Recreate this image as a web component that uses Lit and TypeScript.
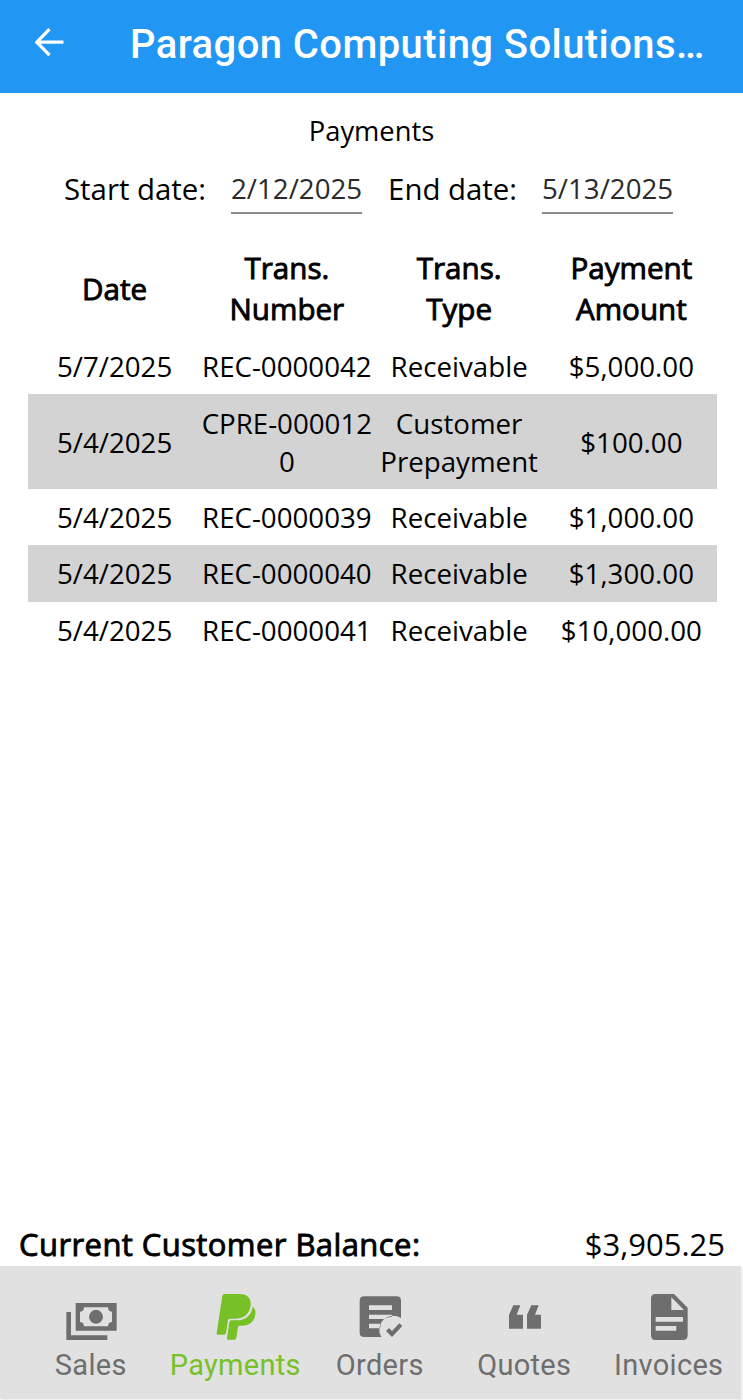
import { LitElement, html, css, svg } from "lit";
import { customElement, property } from "lit/decorators.js";
import { classMap } from "lit/directives/class-map.js";

interface Payment {
  date: string;
  num: string;
  type: string;
  amount: string;
}

const PAYMENTS: Payment[] = [
  { date: "5/7/2025", num: "REC-0000042", type: "Receivable", amount: "$5,000.00" },
  { date: "5/4/2025", num: "CPRE-0000120", type: "Customer Prepayment", amount: "$100.00" },
  { date: "5/4/2025", num: "REC-0000039", type: "Receivable", amount: "$1,000.00" },
  { date: "5/4/2025", num: "REC-0000040", type: "Receivable", amount: "$1,300.00" },
  { date: "5/4/2025", num: "REC-0000041", type: "Receivable", amount: "$10,000.00" },
];

const TABS = [
  {
    label: "Sales",
    box: "57 39 192 144",
    icon: svg`<path fill-rule="evenodd" d="M107 69H230V152H107ZM132 82A12 12 0 0 1 120 95V126A12 12 0 0 1 132 139H204A12 12 0 0 1 216 126V95A12 12 0 0 1 204 82Z"/><circle cx="168" cy="110.500" r="21"/><path d="M79 96H93V166H202V180H79Z"/>`,
  },
  {
    label: "Payments",
    box: "99 39 192 144",
    icon: svg`<path d="M163 42H209C232 42 245 56 242 76C239 102 222 116 197 116H180Q175 116 174 121L168 160Q167 164 163 164H144Q139 164 140 159L157 47Q158 42 163 42Z"/><path d="M248 80C254 84 258 93 256 103C253 126 238 137 216 137H209Q205 137 204 141L199 174Q198 179 194 179H174Q170 179 171 175L178 126Q179 121 184 121H198C226 121 244 107 248 80Z"/>`,
  },
  {
    label: "Orders",
    box: "84 39 192 144",
    icon: svg`<path fill-rule="evenodd" d="M133 49H230Q243 49 243 62V114A42 42 0 0 0 184 171H133Q119 171 119 158V62Q119 49 133 49ZM147 76V90H216V76ZM147 104V117H193Q202 111 216 110V104ZM147 131V145H180Q181 138 184 131Z"/><path d="M207 144L216 153L238 130L247 138L216 171L198 153Z"/>`,
  },
  {
    label: "Quotes",
    box: "96 39 192 144",
    icon: svg`<path d="M160 76H181L170 104H189V146H147V104ZM214 76H236L225 104H243V146H201V104Z"/>`,
  },
  {
    label: "Invoices",
    box: "111 39 192 144",
    icon: svg`<path fill-rule="evenodd" d="M166 42H222L263 83V166Q263 180 249 180H166Q153 180 153 166V56Q153 42 166 42ZM214 52V90H252ZM167 111V125H249V111ZM167 138V152H229V138Z"/>`,
  },
];

@customElement("date-field")
class DateField extends LitElement {
  @property() label = "";
  @property() value = "";
  static styles = css`
    :host { display: flex; align-items: flex-start; }
    .label { font-size: 29.400px; line-height: 38px; margin-right: 25px; white-space: nowrap; }
    .value {
      box-sizing: border-box; width: 131px; height: 44px; color: #2b2b2b;
      border-bottom: 2px solid #8b8b8b; font-size: 27.700px; line-height: 36px;
      white-space: nowrap; display: flex; justify-content: center;
    }
  `;
  render() {
    return html`<span class="label">${this.label}</span><span class="value">${this.value}</span>`;
  }
}

@customElement("payments-table")
class PaymentsTable extends LitElement {
  static styles = css`
    :host { display: block; }
    .row { display: grid; grid-template-columns: repeat(4, 1fr); align-items: center; text-align: center; padding: 9.200px 0; font-size: 27.700px; line-height: 38px; }
    .row.alt { background: #d3d3d3; }
    .row.head { padding: 0 0 9px; font-size: 29.600px; line-height: 41px; -webkit-text-stroke: 0.900px #000; }
    .cell { padding-left: 1px; }
    .num { word-break: break-all; }
    .head .cell { padding: 0 19px 0 20px; }
  `;
  render() {
    return html`
      <div class="row head">
        ${["Date", "Trans. Number", "Trans. Type", "Payment Amount"].map((h) => html`<div class="cell">${h}</div>`)}
      </div>
      ${PAYMENTS.map(
        (p, i) => html`<div class=${classMap({ row: true, alt: i % 2 === 1 })}>
          <div class="cell">${p.date}</div>
          <div class="cell num">${p.num}</div>
          <div class="cell">${p.type}</div>
          <div class="cell">${p.amount}</div>
        </div>`
      )}
    `;
  }
}

@customElement("app-root")
class AppRoot extends LitElement {
  static styles = css`
    :host {
      display: flex; flex-direction: column; width: 743px; height: 1400px; box-sizing: border-box;
      overflow: hidden; background: #fff; color: #000; font-family: "Open Sans", "Noto Sans", sans-serif;
    }
    .bar { display: flex; align-items: center; height: 93px; flex: none; box-sizing: border-box; padding: 0 0 3px 35px; background: #2196f3; color: #fff; }
    .back { width: 29px; height: 29px; margin: 0 66px 6px 0; flex: none; }
    .title { font: 500 40px/48px Roboto, sans-serif; letter-spacing: 0.420px; white-space: nowrap; }
    .heading { text-align: center; font-size: 27.300px; line-height: 38px; margin-top: 19px; }
    .dates { display: flex; gap: 26px; padding-left: 64px; margin-top: 20px; }
    payments-table { margin: 33px 26px 0 28px; }
    .balance { margin-top: auto; display: flex; justify-content: space-between; padding: 0 18px 1px 19px; font-size: 31px; line-height: 42px; }
    .strong { -webkit-text-stroke: 0.900px #000; letter-spacing: 0.420px; }
    .tabs { display: grid; grid-template-columns: repeat(5, 144.500px); height: 133px; flex: none; box-sizing: border-box; padding: 27px 0 0 18.500px; margin: 0 2px 1px 0; background: #e1e1e1; box-shadow: 2px 1px 0 #f0f0f0; }
    .tab { display: flex; flex-direction: column; align-items: center; color: #6e6e6e; font: 400 29px/36px Roboto, sans-serif; letter-spacing: 0.300px; }
    .tab.on { color: #77c127; }
    .icon { width: 64px; height: 48px; fill: currentColor; margin-bottom: 6px; }
  `;
  render() {
    return html`
      <header class="bar">
        <svg class="back" viewBox="0 0 29 29"><path d="M14.500 1.200L1.800 14.200L14.500 27.200M2 14.200H28.500" fill="none" stroke="#fff" stroke-width="3.300"/></svg>
        <span class="title">Paragon Computing Solutions…</span>
      </header>
      <div class="heading">Payments</div>
      <div class="dates">
        <date-field label="Start date:" value="2/12/2025"></date-field>
        <date-field label="End date:" value="5/13/2025"></date-field>
      </div>
      <payments-table></payments-table>
      <div class="balance"><span class="strong">Current Customer Balance:</span><span>$3,905.25</span></div>
      <nav class="tabs">
        ${TABS.map(
          (t) => html`<div class=${classMap({ tab: true, on: t.label === "Payments" })}>
            <svg class="icon" viewBox=${t.box}>${t.icon}</svg><span>${t.label}</span>
          </div>`
        )}
      </nav>
    `;
  }
}
